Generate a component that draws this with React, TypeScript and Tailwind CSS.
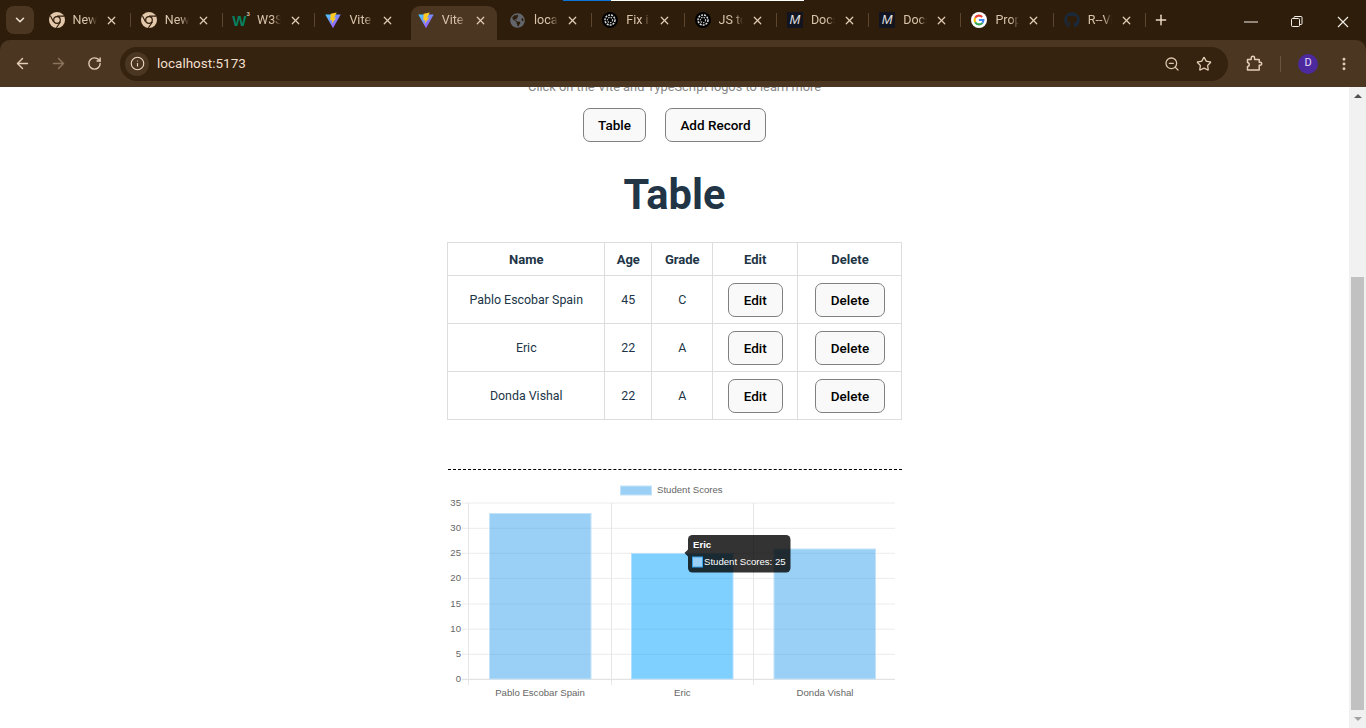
import React from 'react';
import {
  ArrowLeft,
  ArrowRight,
  ChevronDown,
  EllipsisVertical,
  Info,
  Plus,
  RotateCw,
  Star,
  X,
  ZoomOut,
} from 'lucide-react';
import { FaGithub, FaGlobeAmericas } from 'react-icons/fa';

const ChromeIcon = () => (
  <svg width="16" height="16" viewBox="0 0 16 16">
    <circle cx="8" cy="8" r="8" fill="#e3c8ab" />
    <circle cx="8" cy="8" r="3.9" fill="#2f1d0b" />
    <circle cx="8" cy="8" r="2.7" fill="#e3c8ab" />
    <path d="M8 4.1H15M4.6 10 1.5 4M11.4 10 7.4 15.8" stroke="#2f1d0b" strokeWidth="1.1" />
  </svg>
);

const ViteIcon = () => (
  <svg width="17" height="17" viewBox="0 0 17 17">
    <defs>
      <linearGradient id="viteBody" x1="0" y1="0" x2="1" y2="1">
        <stop offset="0" stopColor="#41d1ff" />
        <stop offset="1" stopColor="#bd34fe" />
      </linearGradient>
    </defs>
    <path d="M0.3 2.2 16.7 2.2 8.5 16.8Z" fill="url(#viteBody)" />
    <path d="M12.4 0 6 1.2 5.6 8.6 7.8 8.1 7.2 12 12 5.4 9.6 5.9Z" fill="#ffc91f" />
  </svg>
);

const W3Icon = () => (
  <span className="flex w-4 justify-center font-['Liberation_Sans',sans-serif] text-[15px] leading-none font-bold text-[#04815f]">
    W<span className="-mt-[2px] text-[6px] text-[#d8c0a8]">3</span>
  </span>
);

const GptIcon = () => (
  <svg width="16" height="16" viewBox="0 0 16 16">
    <circle cx="8" cy="8" r="8" fill="#000" />
    <circle cx="8" cy="8" r="5" fill="none" stroke="#d9d9d9" strokeWidth="1.5" strokeDasharray="2 1" />
    <circle cx="8" cy="8" r="2.6" fill="none" stroke="#bdbdbd" strokeWidth="1.2" strokeDasharray="1.5 1" />
  </svg>
);

const MetaIcon = () => (
  <span className="flex h-4 w-4 items-center justify-center bg-[#12141f] font-['Liberation_Sans',sans-serif] text-[13px] text-[#e2e2e2] italic">
    M
  </span>
);

const GoogleIcon = () => (
  <svg width="16" height="16" viewBox="0 0 16 16">
    <circle cx="8" cy="8" r="8" fill="#fff" />
    <g fill="none" strokeWidth="2.1">
      <path d="M11.2 5A4.4 4.4 0 0 0 4.2 5.8" stroke="#ea4335" />
      <path d="M4.2 5.8A4.4 4.4 0 0 0 4.2 10.2" stroke="#fbbc05" />
      <path d="M4.2 10.2A4.4 4.4 0 0 0 11.4 10.8" stroke="#34a853" />
      <path d="M11.4 10.8A4.4 4.4 0 0 0 12.4 8H8" stroke="#4285f4" />
    </g>
  </svg>
);

const ExtensionIcon = () => (
  <svg width="17" height="17" viewBox="0 0 17 17" fill="none" stroke="#e3cdb5" strokeWidth="1.5" strokeLinejoin="round">
    <path d="M1.5 4.5H5.2V3a1.7 1.7 0 0 1 3.4 0V4.5H13.2V7.2H14.2a1.5 1.5 0 0 1 0 3H13.2V15H1.5V11.6C3.8 11.6 3.8 7.6 1.5 7.6Z" />
  </svg>
);

const tabs: { title: string; icon: React.ReactNode; active?: boolean; noDivider?: boolean }[] = [
  { title: 'New Tab', icon: <ChromeIcon /> },
  { title: 'New Tab', icon: <ChromeIcon /> },
  { title: 'W3Schools', icon: <W3Icon /> },
  { title: 'Vite + TS', icon: <ViteIcon />, noDivider: true },
  { title: 'Vite + TS', icon: <ViteIcon />, active: true, noDivider: true },
  { title: 'localhost', icon: <FaGlobeAmericas size={15} color="#62666c" /> },
  { title: 'Fix issue', icon: <GptIcon /> },
  { title: 'JS to TS', icon: <GptIcon /> },
  { title: 'Docs', icon: <MetaIcon /> },
  { title: 'Docs', icon: <MetaIcon /> },
  { title: 'Property', icon: <GoogleIcon /> },
  { title: 'R--Vite', icon: <FaGithub size={16} color="#1b2a3a" /> },
];

const students = [
  { name: 'Pablo Escobar Spain', age: 45, grade: 'C' },
  { name: 'Eric', age: 22, grade: 'A' },
  { name: 'Donda Vishal', age: 22, grade: 'A' },
];

const uiFont = "font-['Roboto',sans-serif]";

const Tab = ({ title, icon, active, noDivider }: (typeof tabs)[number]) => (
  <div className="relative flex h-[34px] w-[92.3px] shrink-0 items-center pb-[6px] pl-[10px]">
    {active && <span className="absolute inset-y-0 right-[3px] left-[3px] rounded-t-[9px] bg-[#4b3622]" />}
    <span className="relative flex w-4 shrink-0 items-center justify-center">{icon}</span>
    <span className="relative ml-2 w-[24px] shrink-0 overflow-hidden text-[12.5px] whitespace-nowrap text-[#d9c3ab] [mask-image:linear-gradient(to_right,black_65%,transparent)]">
      {title}
    </span>
    <X size={13} strokeWidth={2.2} className="relative ml-[8px] shrink-0 text-[#e3cdb5]" />
    {!active && !noDivider && <span className="absolute top-[7px] right-0 h-[14px] w-px bg-[#5c4630]" />}
  </div>
);

const BrowserChrome = () => (
  <header className={`shrink-0 bg-[#2f1d0b] ${uiFont}`}>
    <div className="relative flex h-10 items-end pl-[6px]">
      <div className="absolute top-0 left-[563px] flex h-px">
        <span className="w-12 bg-[#0b74d8]" />
        <span className="w-[193px] bg-white" />
      </div>
      <button className="mb-[6px] flex h-[28px] w-[28px] items-center justify-center rounded-lg bg-[#4b3622] text-[#f0e0cf]">
        <ChevronDown size={14} strokeWidth={2.6} />
      </button>
      <div className="ml-[4.5px] flex">
        {tabs.map((tab, i) => (
          <Tab key={i} {...tab} />
        ))}
      </div>
      <Plus size={16} strokeWidth={2.2} className="mb-[12px] ml-[7px] text-[#ecd9c4]" />
      <div className="mb-[12px] ml-auto flex w-[138px] items-center text-[#f5f0ea]">
        <span className="flex w-[46px] justify-center">
          <svg width="14" height="10" viewBox="0 0 14 10">
            <path d="M0 5H14" stroke="currentColor" />
          </svg>
        </span>
        <span className="flex w-[46px] justify-center">
          <svg width="12" height="12" viewBox="0 0 12 12" fill="none" stroke="currentColor">
            <rect x="0.5" y="2.5" width="8" height="8" rx="1" />
            <path d="M3 2.5V1.5a1 1 0 0 1 1-1h6a1 1 0 0 1 1 1v6a1 1 0 0 1-1 1H8.5" />
          </svg>
        </span>
        <span className="flex w-[46px] justify-center">
          <svg width="12" height="12" viewBox="0 0 12 12" stroke="currentColor" strokeWidth="1.1">
            <path d="M1 1 11 11M11 1 1 11" />
          </svg>
        </span>
      </div>
    </div>
    <div className="flex h-[47px] items-center rounded-t-[10px] bg-[#4b3622] pl-1">
      <span className="flex w-9 justify-center text-[#e3cdb5]">
        <ArrowLeft size={17} strokeWidth={2} />
      </span>
      <span className="flex w-9 justify-center text-[#8a745c]">
        <ArrowRight size={17} strokeWidth={2} />
      </span>
      <span className="flex w-9 justify-center text-[#e3cdb5]">
        <RotateCw size={15} strokeWidth={2.2} />
      </span>
      <div className="ml-2 flex h-[34px] flex-1 items-center rounded-full bg-[#35220f] pl-[5px]">
        <span className="flex h-6 w-6 items-center justify-center rounded-full bg-[#4b3622] text-[#ecd9c4]">
          <Info size={15} strokeWidth={1.8} />
        </span>
        <span className="ml-2 text-[13.5px] text-[#f0dfcd]">localhost:5173</span>
        <ZoomOut size={16} strokeWidth={1.9} className="ml-auto text-[#dcc6ae]" />
        <Star size={16} strokeWidth={1.9} className="mr-4 ml-4 text-[#e3cdb5]" />
      </div>
      <div className="flex w-[138px] items-center">
        <span className="ml-[18px] flex">
          <ExtensionIcon />
        </span>
        <span className="ml-[17px] h-4 w-px bg-[#6b5540]" />
        <span className="ml-[17px] flex h-5 w-5 items-center justify-center rounded-full bg-[#4c2a9e] text-[11px] text-[#e6dcff]">
          D
        </span>
        <EllipsisVertical size={16} strokeWidth={2.4} className="ml-[18px] text-[#e3cdb5]" />
      </div>
    </div>
  </header>
);

const RecordButton = ({ children, className }: { children: React.ReactNode; className: string }) => (
  <button
    className={`rounded-[7px] border border-[#808080] bg-[#f9f9f9] pt-px text-[13.5px] font-medium text-black ${className}`}
  >
    {children}
  </button>
);

const gridYs = [503, 528.3, 553.3, 578.4, 604, 629.2, 654.3, 679.3];

const ScoreChart = () => (
  <svg
    className="mt-2 block h-[225px] w-[454px]"
    viewBox="448 478 454 225"
    fontFamily="'Liberation Sans', sans-serif"
    fontSize="9.6"
    fill="#666"
  >
    <rect x="620.5" y="486" width="31" height="9" fill="#9ad0f5" stroke="#c4e3f9" />
    <text x="657" y="493">Student Scores</text>

    {gridYs.map((y, i) => (
      <g key={y}>
        <line x1="462" x2="895" y1={y} y2={y} stroke={i === 7 ? '#dcdcdc' : '#ececec'} />
        <text x="461" y={y + 3} textAnchor="end">
          {35 - i * 5}
        </text>
      </g>
    ))}
    {[468.5, 611.5, 753.5].map((x) => (
      <line key={x} x1={x} x2={x} y1="503" y2="685" stroke="#e6e6e6" />
    ))}

    <rect x="489.5" y="513.5" width="101.5" height="165.5" fill="#36a2eb" fillOpacity="0.5" stroke="#c4e3f9" />
    <rect x="631.5" y="553.5" width="101.5" height="125.5" fill="#00a0ff" fillOpacity="0.5" stroke="#b3e0ff" />
    <rect x="774" y="549" width="101.5" height="130" fill="#36a2eb" fillOpacity="0.5" stroke="#c4e3f9" />

    <text x="540" y="695.5" textAnchor="middle">Pablo Escobar Spain</text>
    <text x="682.3" y="695.5" textAnchor="middle">Eric</text>
    <text x="825" y="695.5" textAnchor="middle">Donda Vishal</text>

    <path d="M684.5 553 688 549.5V556.5Z" fill="#000" fillOpacity="0.8" />
    <rect x="688" y="535" width="102.5" height="37.5" rx="4.5" fill="#000" fillOpacity="0.8" />
    <text x="693" y="548" fill="#fff" fontWeight="700">Eric</text>
    <rect x="692.5" y="557" width="10" height="10" fill="#9ad0f5" stroke="#36a2eb" />
    <text x="704" y="565" fill="#fff">Student Scores: 25</text>
  </svg>
);

const FakeScrollbar = () => (
  <div className="flex w-[17px] shrink-0 flex-col items-center bg-[#f1f1f1] pt-[7px]">
    <span className="h-0 w-0 border-x-[4px] border-b-[4px] border-x-transparent border-b-[#505050]" />
    <span className="mt-[179px] h-[433px] w-[13px] bg-[#c1c1c1]" />
    <span className="mt-[7px] h-0 w-0 border-x-[4px] border-t-[4px] border-x-transparent border-t-[#a3a3a3]" />
  </div>
);

export default function App() {
  return (
    <div className="flex h-screen flex-col overflow-hidden bg-white">
      <BrowserChrome />
      <div className="flex min-h-0 flex-1">
        <main className={`flex flex-1 flex-col items-center overflow-hidden ${uiFont}`}>
          <p className="-mt-[10px] h-5 shrink-0 text-[12.8px] leading-[19px] text-[#888]">
            Click on the Vite and TypeScript logos to learn more
          </p>
          <div className="mt-[11px] flex shrink-0 gap-[19px]">
            <RecordButton className="h-[34px] w-[63px]">Table</RecordButton>
            <RecordButton className="h-[34px] w-[101px]">Add Record</RecordButton>
          </div>
          <h1 className="mt-[28px] h-[50px] shrink-0 text-[41.6px] leading-[50px] font-bold text-[#213547]">Table</h1>
          <table className="mt-[22px] w-[454.5px] shrink-0 table-fixed border-collapse text-[12.4px] text-[#213547]">
            <colgroup>
              <col className="w-[157px]" />
              <col className="w-[47px]" />
              <col className="w-[61px]" />
              <col className="w-[85px]" />
              <col className="w-[104.5px]" />
            </colgroup>
            <thead>
              <tr className="h-[33px]">
                {['Name', 'Age', 'Grade', 'Edit', 'Delete'].map((h) => (
                  <th key={h} className="border border-[#dddddd] p-0 pt-px pl-px text-center text-[13px] font-bold">
                    {h}
                  </th>
                ))}
              </tr>
            </thead>
            <tbody>
              {students.map((s) => (
                <tr key={s.name} className="h-[48px]">
                  <td className="border border-[#dddddd] p-0 pt-px pl-px text-center">{s.name}</td>
                  <td className="border border-[#dddddd] p-0 pt-px pl-px text-center">{s.age}</td>
                  <td className="border border-[#dddddd] p-0 pt-px pl-px text-center">{s.grade}</td>
                  <td className="border border-[#dddddd] p-0 pl-px text-center">
                    <RecordButton className="h-[34px] w-[55px]">Edit</RecordButton>
                  </td>
                  <td className="border border-[#dddddd] p-0 pl-px text-center">
                    <RecordButton className="h-[34px] w-[70px]">Delete</RecordButton>
                  </td>
                </tr>
              ))}
            </tbody>
          </table>
          <div className="mt-[49px] w-[454px] shrink-0 border-t border-dashed border-black" />
          <ScoreChart />
        </main>
        <FakeScrollbar />
      </div>
    </div>
  );
}
